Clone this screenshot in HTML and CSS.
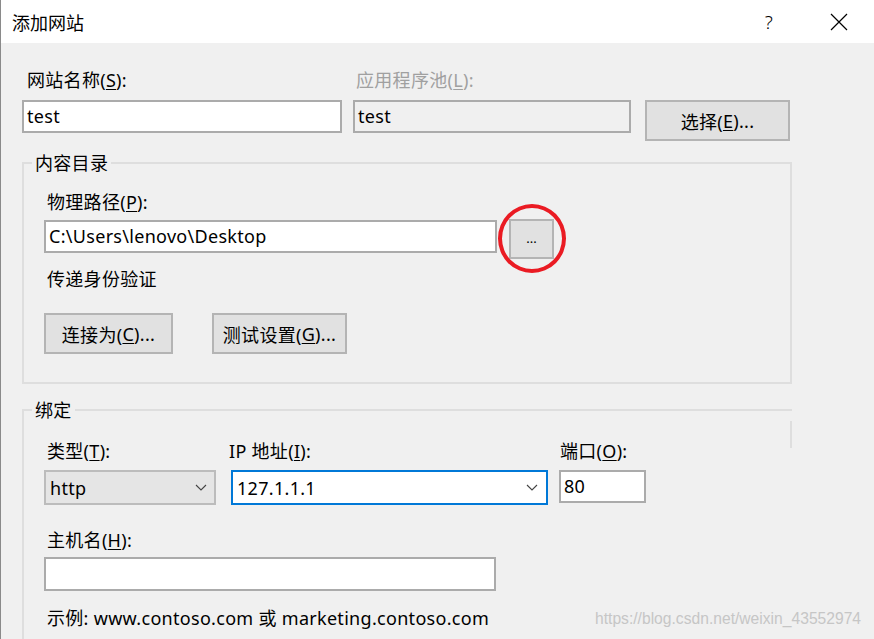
FILE: index.html
```html
<!DOCTYPE html>
<html lang="zh-CN">
<head>
<meta charset="utf-8">
<title>添加网站</title>
<link rel="stylesheet" href="styles.css">
</head>
<body>
<div class="window">
  <div class="titlebar">
    <div class="title">添加网站</div>
    <div class="cap cap-help">?</div>
    <div class="cap cap-close">
      <svg width="18" height="18" viewBox="0 0 18 18"><path d="M1 1 L17 17 M17 1 L1 17" stroke="#000" stroke-width="1.2" fill="none"/></svg>
    </div>
  </div>

  <div class="content">
    <div class="toprow">
      <div class="col col-name">
        <div class="label lab-name">网站名称(<u>S</u>):</div>
        <div class="field">test</div>
      </div>
      <div class="col col-pool">
        <div class="label lab-pool disabled">应用程序池(<u>L</u>):</div>
        <div class="field field-disabled">test</div>
      </div>
      <div class="col col-select">
        <div class="btn btn-select">选择(<u>E</u>)...</div>
      </div>
    </div>

    <fieldset class="group group-content">
      <legend>内容目录</legend>
      <div class="label first">物理路径(<u>P</u>):</div>
      <div class="pathrow">
        <div class="field field-path">C:\Users\lenovo\Desktop</div>
        <div class="browse">
          <div class="btn btn-browse">...</div>
          <div class="ring"></div>
        </div>
      </div>
      <div class="label auth">传递身份验证</div>
      <div class="btnrow">
        <div class="btn btn-connect">连接为(<u>C</u>)...</div>
        <div class="btn btn-test">测试设置(<u>G</u>)...</div>
      </div>
    </fieldset>

    <fieldset class="group group-binding">
      <legend>绑定</legend>
      <div class="bindrow">
        <div class="bcol bcol-type">
          <div class="label lab-type">类型(<u>T</u>):</div>
          <div class="combo combo-type">
            <span>http</span>
            <svg class="chev" width="12" height="7" viewBox="0 0 12 7"><path d="M1 1 L6 6 L11 1" stroke="#444" stroke-width="1.1" fill="none"/></svg>
          </div>
        </div>
        <div class="bcol bcol-ip">
          <div class="label lab-ip">IP 地址(<u>I</u>):</div>
          <div class="combo combo-ip">
            <span>127.1.1.1</span>
            <svg class="chev" width="12" height="7" viewBox="0 0 12 7"><path d="M1 1 L6 6 L11 1" stroke="#444" stroke-width="1.1" fill="none"/></svg>
          </div>
        </div>
        <div class="bcol bcol-port">
          <div class="label lab-port">端口(<u>O</u>):</div>
          <div class="field field-port">80</div>
        </div>
      </div>
      <div class="label host">主机名(<u>H</u>):</div>
      <div class="field field-host"></div>
      <div class="label example">示例: www.contoso.com 或 marketing.contoso.com</div>
    </fieldset>
  </div>

  <div class="watermark">https://blog.csdn.net/weixin_43552974</div>
</div>
</body>
</html>
```

FILE: styles.css
```css
* { box-sizing: border-box; }
html, body { margin: 0; padding: 0; background: #f0f0f0; }
body {
  font-family: "Noto Sans", "Noto Sans CJK SC", sans-serif;
  font-size: 18px;
  letter-spacing: 0.3px;
  color: #000;
}
u { text-decoration-thickness: 1px; text-underline-offset: 2px; }

.window {
  position: relative;
  width: 874px;
  height: 639px;
  background: #f0f0f0;
  border-left: 1px solid #8a8a8a;
  overflow: hidden;
}

.titlebar {
  height: 43px;
  background: #fff;
  display: flex;
  align-items: center;
}
.title {
  flex: 1;
  padding-left: 11px;
  font-size: 18px;
  letter-spacing: 0;
  line-height: 24px;
  font-family: "Noto Sans CJK SC", sans-serif;
}
.cap {
  width: 70px;
  height: 43px;
  display: flex;
  align-items: center;
  justify-content: center;
}
.cap-help { font-size: 19px; font-weight: 300; font-family: "Noto Sans", sans-serif; }
.cap-close { padding-right: 1px; }

.content { padding: 26px 0 0 21px; }

.label { line-height: 22px; height: 22px; white-space: nowrap; }
.disabled { color: #a0a0a0; }

.toprow { display: flex; align-items: flex-start; }
.col { display: flex; flex-direction: column; }
.col-name { width: 320px; }
.col-pool { width: 278px; margin-left: 11px; }
.col-select { width: 145px; margin-left: 14px; padding-top: 31px; }
.lab-name { padding-left: 5px; margin-bottom: 9px; }
.lab-pool { padding-left: 3px; margin-bottom: 9px; }

.field {
  height: 33px;
  background: #fff;
  border: 2px solid #ababab;
  padding: 0 3px;
  line-height: 28px;
  white-space: nowrap;
}
.field-disabled { background: #f0f0f0; }

.btn {
  background: #e1e1e1;
  border: 2px solid #b4b4b4;
  display: flex;
  align-items: center;
  justify-content: center;
  white-space: nowrap;
}
.btn-select { height: 41px; width: 145px; }

.group {
  margin: 0;
  width: 770px;
  border: 2px solid #dedede;
  padding: 0 0 0 20px;
}
.group legend {
  padding: 0 3px;
  margin-left: -12px;
  line-height: 22px;
  height: 22px;
}
.group-content { margin-top: 11px; padding-bottom: 28px; }

.label.first { margin-top: 17px; padding-left: 3px; }
.pathrow { display: flex; align-items: flex-start; margin-top: 6px; }
.field-path { width: 453px; margin-top: 1px; }
.browse { position: relative; margin-left: 12px; }
.btn-browse { width: 45px; height: 40px; font-size: 13px; line-height: 1; padding-bottom: 2px; letter-spacing: 0; }
.ring {
  position: absolute;
  left: -11px;
  top: -15px;
  width: 68px;
  height: 69px;
  border: 4px solid #ea1b23;
  border-radius: 50%;
}
.label.auth { margin-top: 9px; padding-left: 3px; }
.btnrow { display: flex; margin-top: 23px; }
.btn-connect { width: 129px; height: 41px; }
.btn-test { width: 135px; height: 41px; margin-left: 39px; }

.group-binding {
  position: relative;
  margin-top: 15px;
  border-right: 0;
  border-bottom: 0;
  height: 260px;
}
.group-binding::after {
  content: "";
  position: absolute;
  right: 0;
  top: 0;
  width: 2px;
  height: 27px;
  background: #dedede;
}

.bindrow { display: flex; margin-top: 19px; }
.bcol { display: flex; flex-direction: column; }
.bcol-type { width: 172px; }
.bcol-ip { width: 317px; margin-left: 15px; }
.bcol-port { width: 87px; margin-left: 11px; }
.bindrow .label { margin-bottom: 8px; }
.lab-type { padding-left: 3px; }
.lab-ip { margin-left: -2px; }
.lab-port { padding-left: 1px; }

.combo {
  height: 35px;
  display: flex;
  align-items: center;
  justify-content: space-between;
  padding: 0 8px 0 4px;
}
.combo-type { background: #e5e5e5; border: 2px solid #bcbcbc; padding-right: 7px; }
.combo-ip { background: #fff; border: 2px solid #0078d7; padding-right: 8px; }
.field-port { height: 33px; }

.label.host { margin-top: 24px; padding-left: 3px; }
.field-host { width: 452px; height: 34px; margin-top: 6px; }
.label.example { margin-top: 16px; padding-left: 3px; }

.watermark {
  position: absolute;
  left: 594px;
  top: 608px;
  font-family: "Liberation Sans", sans-serif;
  font-size: 17px;
  letter-spacing: 0;
  line-height: 22px;
  color: #c6c6c6;
  white-space: nowrap;
  transform: scaleX(0.92);
  transform-origin: left center;
}
```
